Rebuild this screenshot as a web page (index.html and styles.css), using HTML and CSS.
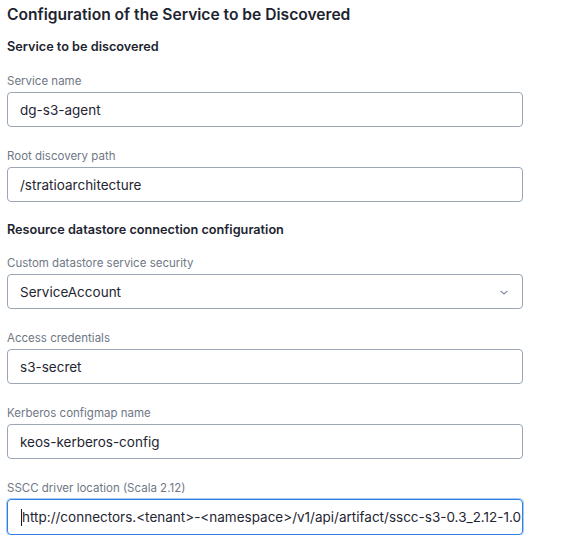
FILE: index.html
```html
<!DOCTYPE html>
<html lang="en">
<head>
<meta charset="utf-8">
<title>Configuration of the Service to be Discovered</title>
<link rel="stylesheet" href="styles.css">
</head>
<body>
<div class="form">
  <h1 class="title">Configuration of the Service to be Discovered</h1>
  <h2 class="section">Service to be discovered</h2>
  <div class="field">
    <div class="label">Service name</div>
    <div class="input">dg-s3-agent</div>
  </div>
  <div class="field">
    <div class="label">Root discovery path</div>
    <div class="input">/stratioarchitecture</div>
  </div>
  <h2 class="section section-2">Resource datastore connection configuration</h2>
  <div class="field">
    <div class="label">Custom datastore service security</div>
    <div class="input select">ServiceAccount
      <svg class="chevron" width="8" height="5" viewBox="0 0 8 5"><path d="M0.5 0.8 L4 4 L7.5 0.8" fill="none" stroke="#7d8a9c" stroke-width="1.1"/></svg>
    </div>
  </div>
  <div class="field">
    <div class="label">Access credentials</div>
    <div class="input">s3-secret</div>
  </div>
  <div class="field">
    <div class="label">Kerberos configmap name</div>
    <div class="input">keos-kerberos-config</div>
  </div>
  <div class="field">
    <div class="label">SSCC driver location (Scala 2.12)</div>
    <div class="input focused"><span class="caret"></span>http://connectors.&lt;tenant&gt;-&lt;namespace&gt;/v1/api/artifact/sscc-s3-0.3_2.12-1.0</div>
  </div>
</div>
</body>
</html>
```
FILE: styles.css
```css
* { box-sizing: border-box; }
html, body { margin: 0; padding: 0; background: #ffffff; }
body { font-family: Inter, "Noto Sans", sans-serif; color: #1d2430; }
.form {
  display: flex;
  flex-direction: column;
  padding: 5px 41px 0 7px;
}
.title {
  margin: 0 0 12px 0;
  font-size: 15.6px;
  line-height: 20px;
  font-weight: 600;
  color: #1d2430;
}
.section {
  margin: 0 0 16px 0;
  font-size: 12.7px;
  line-height: 20px;
  font-weight: 600;
  color: #1d2430;
}
.section-2 { margin-top: 18px; margin-bottom: 15px; }
.field { display: flex; flex-direction: column; gap: 3px; }
.field + .field { margin-top: 21px; }
.label {
  font-size: 11.5px;
  line-height: 16px;
  color: #6f7785;
}
.input {
  position: relative;
  height: 35px;
  border: 1px solid #9aa6b4;
  border-radius: 4px;
  padding: 0 12px;
  display: flex;
  align-items: center;
  font-size: 13.5px;
  color: #1f2633;
  white-space: nowrap;
  overflow: hidden;
}
.chevron { position: absolute; right: 14px; top: 15px; }
.focused {
  height: 36px;
  border: 1px solid #2f7fe0;
  box-shadow: 0 0 0 1px #a9cdf6;
  padding-left: 13px;
}
.caret {
  display: inline-block;
  width: 1px;
  height: 17px;
  background: #1a1a1a;
  flex: none;
}
```
